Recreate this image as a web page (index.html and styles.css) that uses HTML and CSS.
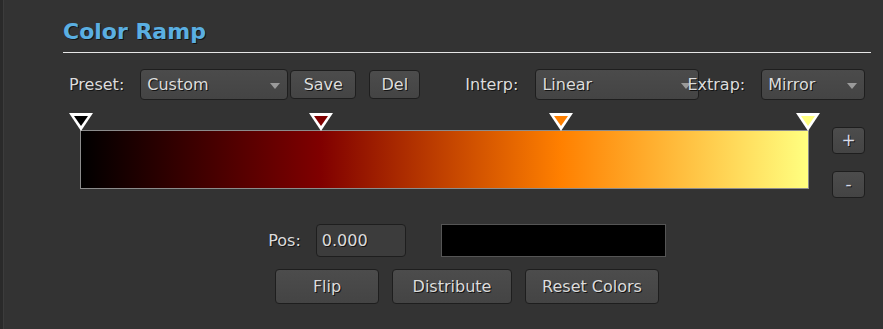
FILE: index.html
```html
<!DOCTYPE html>
<html>
<head>
    <title>Color Ramp</title>
    <link rel="stylesheet" href="styles.css">
</head>
<body>
    <div class="panel">
        <h2 class="title">Color Ramp</h2>

        <div class="toolbar">
            <span class="label lbl-preset">Preset:</span>
            <div class="select sel-preset">Custom<i class="caret"></i></div>
            <button class="btn btn-save">Save</button>
            <button class="btn btn-del">Del</button>
            <span class="label lbl-interp">Interp:</span>
            <div class="select sel-interp">Linear<i class="caret"></i></div>
            <span class="label lbl-extrap">Extrap:</span>
            <div class="select sel-extrap">Mirror<i class="caret"></i></div>
        </div>

        <div class="ramp-row">
            <div class="ramp">
                <div class="stops">
                    <svg class="stop" style="left: 0%" viewBox="0 0 24 18" width="24" height="18">
                        <polygon points="0,0 24,0 12,18" fill="#fff"/>
                        <polygon points="5,3 19,3 12,13" fill="#000"/>
                    </svg>
                    <svg class="stop" style="left: 33%" viewBox="0 0 24 18" width="24" height="18">
                        <polygon points="0,0 24,0 12,18" fill="#fff"/>
                        <polygon points="5,3 19,3 12,13" fill="#800000"/>
                    </svg>
                    <svg class="stop" style="left: 66%" viewBox="0 0 24 18" width="24" height="18">
                        <polygon points="0,0 24,0 12,18" fill="#fff"/>
                        <polygon points="5,3 19,3 12,13" fill="#ff8000"/>
                    </svg>
                    <svg class="stop" style="left: 100%" viewBox="0 0 24 18" width="24" height="18">
                        <polygon points="0,0 24,0 12,18" fill="#fff"/>
                        <polygon points="5,3 19,3 12,13" fill="#ffff80"/>
                    </svg>
                </div>
                <div class="gradient"></div>
            </div>
            <div class="side">
                <button class="btn btn-small">+</button>
                <button class="btn btn-small">-</button>
            </div>
        </div>

        <div class="pos-row">
            <span class="label">Pos:</span>
            <div class="field">0.000</div>
            <div class="swatch"></div>
        </div>

        <div class="actions">
            <button class="btn btn-flip">Flip</button>
            <button class="btn btn-distribute">Distribute</button>
            <button class="btn btn-reset">Reset Colors</button>
        </div>
    </div>
</body>
</html>
```

FILE: styles.css
```css
html {
    background-color: #333;
}
body {
    margin: 0;
    min-height: 100vh;
    background-color: #333;
    border-left: 3px solid #2a2a2a;
    box-shadow: inset 1px 0 #3c3c3c;
    font-family: "DejaVu Sans", Verdana, sans-serif;
    font-size: 16px;
    color: #dcdcdc;
    text-shadow: 1px 1px 0 #141414;
}
.panel {
    margin-left: 60px;
    width: 808px;
}
.title {
    margin: 0;
    padding: 19px 0 7px 0;
    font-size: 22px;
    line-height: 26px;
    font-weight: bold;
    color: #5aafe2;
    border-bottom: 1px solid #e6e6e6;
}
.toolbar {
    display: flex;
    align-items: center;
    height: 31px;
    margin-top: 16px;
}
.label {
    position: relative;
    white-space: nowrap;
}
.lbl-preset {
    margin-left: 6px;
    margin-right: 16px;
}
.lbl-interp {
    margin-left: 45px;
    margin-right: 17px;
}
.lbl-extrap {
    margin-left: -12px;
    margin-right: 16px;
    z-index: 1;
}
.select {
    position: relative;
    box-sizing: border-box;
    height: 31px;
    line-height: 29px;
    padding-left: 6px;
    background: linear-gradient(#4b4b4b, #444);
    border: 1px solid #1e1e1e;
    border-radius: 4px;
}
.caret {
    position: absolute;
    right: 7px;
    top: 13px;
    width: 0;
    height: 0;
    border-left: 5px solid transparent;
    border-right: 5px solid transparent;
    border-top: 6px solid #9a9a9a;
}
.sel-preset {
    width: 148px;
}
.sel-interp {
    width: 164px;
}
.sel-extrap {
    width: 104px;
}
.btn {
    box-sizing: border-box;
    height: 29px;
    padding: 0;
    font-family: inherit;
    font-size: 16px;
    color: #dcdcdc;
    text-shadow: 1px 1px 0 #141414;
    background: linear-gradient(#4c4c4c, #444);
    border: 1px solid #1e1e1e;
    border-radius: 4px;
}
.btn-save {
    width: 66px;
    margin-left: 2px;
}
.btn-del {
    width: 51px;
    margin-left: 13px;
}
.ramp-row {
    display: flex;
    align-items: flex-start;
    height: 76px;
    margin-top: 13px;
}
.ramp {
    margin-left: 17px;
    width: 729px;
}
.stops {
    position: relative;
    height: 17px;
    margin: 0 1px;
    z-index: 1;
}
.stop {
    position: absolute;
    top: 0;
    transform: translateX(-50%);
    display: block;
}
.gradient {
    height: 57px;
    border: 1px solid #8c8c8c;
    background: linear-gradient(to right, #000 0%, #800000 33%, #ff8000 66%, #ffff80 100%);
}
.side {
    display: flex;
    flex-direction: column;
    gap: 17px;
    margin-left: 23px;
    padding-top: 14px;
}
.btn-small {
    width: 33px;
    height: 27px;
    font-size: 17px;
    line-height: 1;
    color: #d8dde8;
}
.pos-row {
    display: flex;
    justify-content: center;
    align-items: center;
    margin-top: 35px;
    height: 33px;
}
.pos-row .label {
    margin-right: 15px;
}
.field {
    box-sizing: border-box;
    width: 90px;
    height: 33px;
    line-height: 31px;
    padding-left: 5px;
    background-color: #3c3c3c;
    border: 1px solid #1e1e1e;
    border-radius: 4px;
}
.swatch {
    box-sizing: border-box;
    width: 225px;
    height: 33px;
    margin-left: 35px;
    background-color: #000;
    border: 1px solid #555;
}
.actions {
    display: flex;
    justify-content: center;
    gap: 13px;
    margin-top: 12px;
}
.actions .btn {
    height: 35px;
}
.btn-flip {
    width: 104px;
}
.btn-distribute {
    width: 120px;
}
.btn-reset {
    width: 134px;
}
```
